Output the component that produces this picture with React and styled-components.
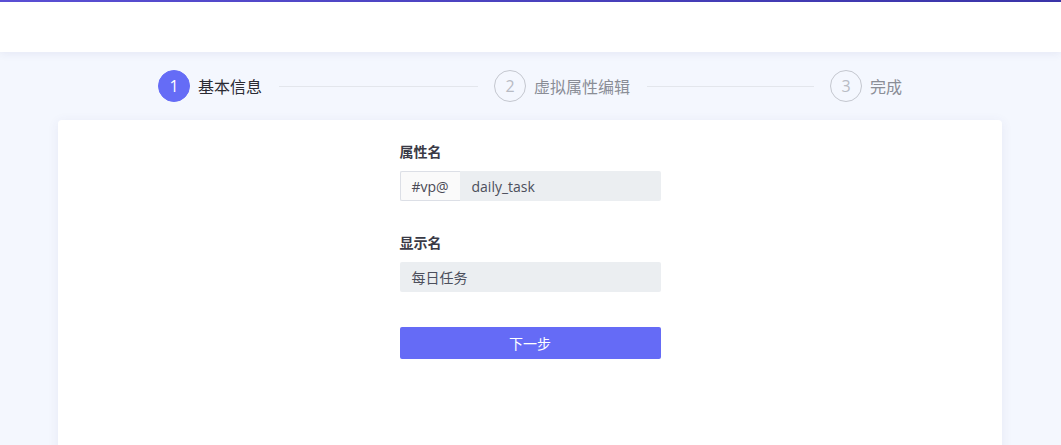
import React from "react";
import styled, { createGlobalStyle } from "styled-components";

const GlobalStyle = createGlobalStyle`
  html, body {
    margin: 0;
    padding: 0;
    background: #f4f7fe;
    font-family: "Open Sans", "Noto Sans CJK SC", sans-serif;
  }
  * {
    box-sizing: border-box;
  }
`;

const Page = styled.div`
  height: 445px;
  overflow: hidden;
  background: #f4f7fe;
`;

const Header = styled.div`
  height: 52px;
  background: #ffffff;
  border-top: 2px solid transparent;
  border-image: linear-gradient(90deg, #5a4fd4, #3a34a8) 1;
  box-shadow: 0 2px 8px rgba(60, 70, 140, 0.08);
  position: relative;
  z-index: 1;
`;

const StepsRow = styled.div`
  width: 744px;
  margin: 18px 0 0 158px;
  height: 32px;
  display: flex;
  align-items: center;
`;

const Step = styled.div`
  display: flex;
  align-items: center;
  flex: ${(p) => (p.$last ? "none" : "1")};
`;

const Circle = styled.div`
  width: 32px;
  height: 32px;
  border-radius: 50%;
  display: flex;
  align-items: center;
  justify-content: center;
  font-size: 16px;
  flex: none;
  background: ${(p) => (p.$active ? "#656cf6" : "transparent")};
  border: 1px solid ${(p) => (p.$active ? "#656cf6" : "#c4c7cf")};
  color: ${(p) => (p.$active ? "#ffffff" : "#b8bbc4")};
`;

const StepTitle = styled.div`
  margin-left: 8px;
  font-size: 16px;
  font-family: "Noto Sans CJK SC", sans-serif;
  color: ${(p) => (p.$active ? "#2b2b33" : "#8a8d96")};
  white-space: nowrap;
`;

const StepLine = styled.div`
  flex: 1;
  height: 1px;
  background: #e3e6ec;
  margin: 0 16px 0 17px;
`;

const Card = styled.div`
  width: 944px;
  margin: 18px 0 0 58px;
  height: 400px;
  background: #ffffff;
  border-radius: 4px;
  box-shadow: 0 2px 12px rgba(60, 70, 140, 0.08);
  padding-top: 21px;
`;

const Form = styled.div`
  width: 261px;
  margin: 0 auto;
  display: flex;
  flex-direction: column;
`;

const Label = styled.div`
  font-family: "Noto Sans CJK SC", sans-serif;
  font-size: 14px;
  font-weight: 700;
  color: #3a3a46;
  line-height: 20px;
  margin-top: ${(p) => p.$top || 0}px;
  margin-bottom: 10px;
`;

const InputGroup = styled.div`
  display: flex;
  height: 30px;
  flex: none;
`;

const Prepend = styled.div`
  width: 60px;
  flex: none;
  display: flex;
  align-items: center;
  justify-content: center;
  background: #fafafa;
  border: 1px solid #dcdfe6;
  border-right: none;
  border-radius: 2px 0 0 2px;
  color: #4a4a55;
  font-size: 14px;
`;

const Field = styled.div`
  flex: ${(p) => (p.$grouped ? "1" : "none")};
  height: 30px;
  display: flex;
  align-items: center;
  background: #ebeef1;
  border-radius: ${(p) => (p.$grouped ? "0 2px 2px 0" : "2px")};
  padding-left: 12px;
  color: #4c4f5c;
  font-size: 14px;
  font-family: "Open Sans", "Noto Sans CJK SC", sans-serif;
`;

const NextButton = styled.button`
  margin-top: 35px;
  height: 32px;
  flex: none;
  border: none;
  border-radius: 2px;
  background: #656bf6;
  color: #ffffff;
  font-size: 14px;
  font-family: "Noto Sans CJK SC", sans-serif;
  cursor: pointer;
`;

const steps = ["基本信息", "虚拟属性编辑", "完成"];

export default function App() {
  return (
    <Page>
      <GlobalStyle />
      <Header />
      <StepsRow>
        {steps.map((title, i) => {
          const last = i === steps.length - 1;
          const active = i === 0;
          return (
            <Step key={title} $last={last}>
              <Circle $active={active}>{i + 1}</Circle>
              <StepTitle $active={active}>{title}</StepTitle>
              {!last && <StepLine />}
            </Step>
          );
        })}
      </StepsRow>
      <Card>
        <Form>
          <Label>属性名</Label>
          <InputGroup>
            <Prepend>#vp@</Prepend>
            <Field $grouped>daily_task</Field>
          </InputGroup>
          <Label $top={31}>显示名</Label>
          <Field>每日任务</Field>
          <NextButton>下一步</NextButton>
        </Form>
      </Card>
    </Page>
  );
}
